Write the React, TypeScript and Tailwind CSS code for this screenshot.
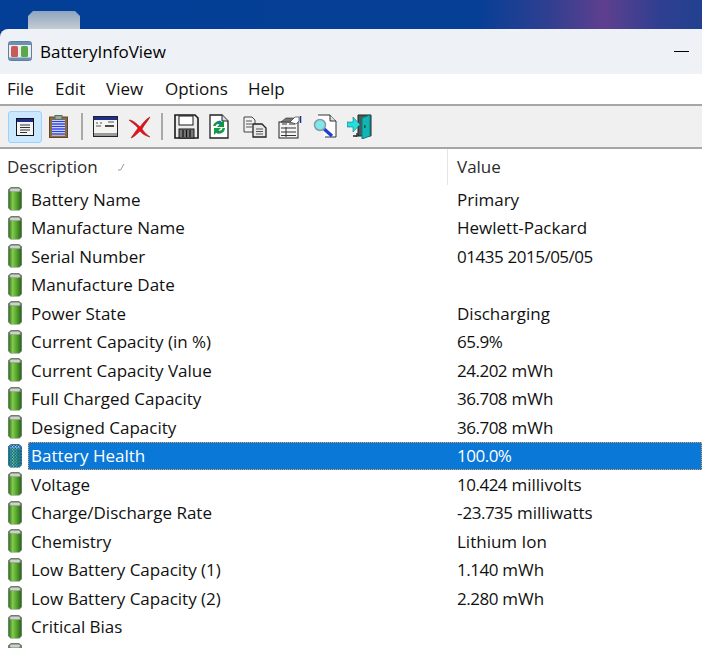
const rows: [string, string][] = [
  ["Battery Name", "Primary"],
  ["Manufacture Name", "Hewlett-Packard"],
  ["Serial Number", "01435 2015/05/05"],
  ["Manufacture Date", ""],
  ["Power State", "Discharging"],
  ["Current Capacity (in %)", "65.9%"],
  ["Current Capacity Value", "24.202 mWh"],
  ["Full Charged Capacity", "36.708 mWh"],
  ["Designed Capacity", "36.708 mWh"],
  ["Battery Health", "100.0%"],
  ["Voltage", "10.424 millivolts"],
  ["Charge/Discharge Rate", "-23.735 milliwatts"],
  ["Chemistry", "Lithium Ion"],
  ["Low Battery Capacity (1)", "1.140 mWh"],
  ["Low Battery Capacity (2)", "2.280 mWh"],
  ["Critical Bias", ""],
  ["", ""],
];

const menus = [
  { label: "File", width: "w-[48px]" },
  { label: "Edit", width: "w-[51px]" },
  { label: "View", width: "w-[59px]" },
  { label: "Options", width: "w-[83px]" },
  { label: "Help", width: "w-[50px]" },
];

// digits run a bit wider here than in the screenshot's font
function Value({ text }: { text: string }) {
  return (
    <span>
      {text.split(/([\d./]+)/).map((part, i) =>
        i % 2 === 1 ? (
          <span key={i} className="tracking-[-0.5px]">
            {part}
          </span>
        ) : (
          part
        ),
      )}
    </span>
  );
}

function BatteryIcon({ selected }: { selected?: boolean }) {
  return (
    <svg width="16" height="26" viewBox="0 0 16 26" className="shrink-0">
      <defs>
        <linearGradient id="batt" x1="0" x2="1" y1="0" y2="0">
          <stop offset="0" stopColor="#2f7a1e" />
          <stop offset="0.3" stopColor="#86c94e" />
          <stop offset="0.6" stopColor="#58a82f" />
          <stop offset="1" stopColor="#2a6a18" />
        </linearGradient>
        <pattern id="mesh" width="3" height="3" patternUnits="userSpaceOnUse">
          <rect width="2" height="1.500" fill="#0a78d7" />
          <rect x="1.500" y="1.500" width="1.500" height="1.500" fill="#0a5fb0" />
        </pattern>
      </defs>
      <path d="M4 1h8l3 2.500v18.500l-2.500 2.500h-9L1 22V3.500z" fill="#6f7f6c" />
      <rect x="3" y="2.500" width="10" height="3" rx="1.500" fill="#cdd3c9" />
      <path d="M2 6h12v16l-2 2H4l-2-2z" fill="url(#batt)" />
      {selected && <path d="M4 1h8l3 2.500v18.500l-2.500 2.500h-9L1 22V3.500z" fill="url(#mesh)" />}
    </svg>
  );
}

function AppIcon() {
  return (
    <svg width="24" height="20" viewBox="0 0 24 20">
      <rect x="0.5" y="0.5" width="23" height="19" rx="2" fill="#e8eef2" stroke="#5f7f9f" />
      <rect x="1" y="1" width="22" height="3" fill="#6d8fb0" />
      <rect x="3" y="5" width="7" height="11" rx="1.500" fill="#c95a5a" />
      <rect x="13" y="5" width="7" height="11" rx="1.500" fill="#5aa84a" />
      <rect x="1" y="16.500" width="22" height="2.500" fill="#6d8fb0" />
    </svg>
  );
}

function ReportIcon() {
  return (
    <svg width="18" height="18" viewBox="0 0 18 18">
      <rect x="0.5" y="0.5" width="17" height="17" fill="#f4f4f4" stroke="#111" />
      <rect x="1" y="1" width="16" height="3" fill="#1c2f8f" />
      <path d="M4 7h10M4 9.500h10M4 12h10M4 14.500h7" stroke="#333" strokeWidth="1.200" />
    </svg>
  );
}

function ClipboardIcon() {
  return (
    <svg width="19" height="23" viewBox="0 0 19 23">
      <rect x="0.5" y="2" width="18" height="20.500" fill="#8f6a3a" stroke="#5c4a2a" />
      <rect x="3" y="5" width="13" height="15.500" fill="#fff" />
      <path d="M3 6.500h13M3 9h13M3 11.500h13M3 14h13M3 16.500h13M3 19h13" stroke="#2840e0" strokeWidth="1.300" />
      <rect x="6" y="0.5" width="7" height="4" fill="#9aa89a" stroke="#55705a" />
    </svg>
  );
}

function WindowIcon() {
  return (
    <svg width="25" height="21" viewBox="0 0 25 21">
      <rect x="0.5" y="0.5" width="24" height="20" fill="#f4f4f0" stroke="#222" />
      <rect x="1" y="1" width="23" height="3" fill="#1c2f8f" />
      <rect x="1" y="17" width="23" height="3" fill="#9a9a9a" />
      <path d="M3 7h2M7 7h2M3 10h5M15 6h6" stroke="#555" strokeWidth="1.200" />
      <path d="M12 10h9" stroke="#111" strokeWidth="1.500" />
    </svg>
  );
}

function DeleteIcon() {
  return (
    <svg width="24" height="24" viewBox="0 0 24 24">
      <path d="M1 5c4 0 8 4 11 7 3-4 6-8 10-10-2 4-6 8-8 12 2 3 5 6 8 8-4-1-8-3-10-6-3 3-6 6-9 7 2-3 5-7 7-10C8 10 4 8 1 5z" fill="#ee1016" stroke="#7a1015" strokeWidth="0.5" />
    </svg>
  );
}

function SaveIcon() {
  return (
    <svg width="25" height="25" viewBox="0 0 25 25">
      <path d="M1 1h20l3 3v20H1z" fill="#ededed" stroke="#1a1a1a" strokeWidth="1.600" />
      <rect x="5" y="2" width="14" height="9" fill="#fff" stroke="#1a1a1a" />
      <rect x="5" y="15" width="15" height="9" fill="#777" stroke="#1a1a1a" />
      <path d="M9 16v7M12.500 16v7M16 16v7" stroke="#111" strokeWidth="1.200" />
    </svg>
  );
}

function RefreshIcon() {
  return (
    <svg width="20" height="25" viewBox="0 0 20 25">
      <path d="M1 1h12l6 6v17H1z" fill="#fff" stroke="#222" strokeWidth="1.300" />
      <path d="M13 1v6h6" fill="#ddd" stroke="#222" />
      <path d="M4 12a6 6 0 0 1 9-4l2-2v7h-7l2.500-2.500a3 3 0 0 0-4 1.500z" fill="#0f9a3a" />
      <path d="M16 14a6 6 0 0 1-9 5l-2 2v-7h7l-2.500 2.500a3 3 0 0 0 4-2.500z" fill="#12a03f" />
      <path d="M8 7.500l3-1 2 2-2 2z" fill="#1f6fc0" />
      <path d="M7 15l2 2 2 .500-2 2z" fill="#1f6fc0" />
    </svg>
  );
}

function CopyIcon() {
  return (
    <svg width="24" height="22" viewBox="0 0 24 22">
      <path d="M1 1h8l3 3v12H1z" fill="#f2f2f2" stroke="#444" />
      <path d="M3 5h6M3 8h6M3 11h6" stroke="#555" />
      <path d="M10 8h9l4 4v9H10z" fill="#e8e8e8" stroke="#222" strokeWidth="1.300" />
      <path d="M13 13h7M13 15.500h7M13 18h7" stroke="#555" />
    </svg>
  );
}

function PropertiesIcon() {
  return (
    <svg width="24" height="24" viewBox="0 0 24 24">
      <rect x="1" y="7" width="19" height="16" fill="#f4f4f4" stroke="#222" />
      <path d="M3 7l5-4h8l-4 4z" fill="#777" stroke="#222" strokeWidth="0.600" />
      <path d="M12 7l5-5h4v4l-3 3z" fill="#fff" stroke="#222" strokeWidth="0.600" />
      <path d="M22.500 1v7" stroke="#1c2f8f" strokeWidth="1.500" />
      <path d="M4 9h5M11 9h6M3 13h15M3 17h15M3 20.500h15M8 12v10" stroke="#333" strokeWidth="1" />
    </svg>
  );
}

function FindIcon() {
  return (
    <svg width="24" height="25" viewBox="0 0 24 25">
      <path d="M5 1h12l6 6v16H12" fill="#fff" stroke="#333" />
      <path d="M17 1v6h6" fill="#ddd" stroke="#333" />
      <path d="M10 14l9 8" stroke="#1f3fd0" strokeWidth="3.200" />
      <circle cx="7" cy="11" r="5.500" fill="#7fe6ec" stroke="#8a9aa4" strokeWidth="1.500" />
    </svg>
  );
}

function ExitIcon() {
  return (
    <svg width="25" height="25" viewBox="0 0 25 25">
      <path d="M11 1h13v21H11z" fill="#4a5a5a" stroke="#222" />
      <path d="M15 4l8-3v21l-8 3z" fill="#12b5b5" stroke="#0b7f7f" />
      <rect x="17" y="11" width="1.500" height="3" fill="#063" />
      <path d="M0 8h6V3l7 7.500-7 7.500v-5H0z" fill="#20e0e0" stroke="#0a5a5a" strokeWidth="0.500" />
      <path d="M10 19v4M6 22h4" stroke="#222" strokeWidth="1.300" />
    </svg>
  );
}

function Divider({ className }: { className: string }) {
  return <div className={`h-[27px] w-[2px] shrink-0 bg-[#a9a9a9] ${className}`} />;
}

export default function App() {
  return (
    <div
      className="h-[648px] w-[702px] overflow-hidden bg-[#0a3d91] text-[#111]"
      style={{ fontFamily: '"Open Sans", "Noto Sans", sans-serif' }}
    >
      {/* Desktop behind the window */}
      <div className="h-[29px] bg-[linear-gradient(90deg,#033f97_0%,#063f96_68%,#2f3f90_78%,#5f3f8f_86%,#2f3f90_94%,#234090_100%)] pl-[28px] pt-[11px]">
        <div className="h-[18px] w-[52px] bg-[linear-gradient(180deg,#8ea4c0,#c4ccd4)] [clip-path:polygon(5px_0,47px_0,100%_5px,100%_100%,0_100%,0_5px)]" />
      </div>

      {/* Title bar */}
      <div className="flex h-[45px] items-center justify-between rounded-tl-[8px] bg-[#eef2f6] pb-[1px] pl-[8px] pr-[13px]">
        <div className="flex items-center gap-[8px]">
          <AppIcon />
          <span className="text-[17px] leading-none text-black">BatteryInfoView</span>
        </div>
        <div className="h-[1px] w-[15px] bg-black" />
      </div>

      {/* Menu */}
      <div className="flex h-[30px] items-center bg-white pl-[7px] text-[17px]">
        {menus.map((m) => (
          <span key={m.label} className={m.width}>
            {m.label}
          </span>
        ))}
      </div>

      {/* Toolbar */}
      <div className="flex h-[45px] items-center border-y-2 border-[#a6a6a6] bg-[#f0f0f0] pl-[8px]">
        <div className="flex h-[32px] w-[34px] items-center justify-center rounded-[3px] border border-[#99d1ff] bg-[#cce8ff]">
          <ReportIcon />
        </div>
        <div className="ml-[7px]">
          <ClipboardIcon />
        </div>
        <Divider className="ml-[13px]" />
        <div className="ml-[10px]">
          <WindowIcon />
        </div>
        <div className="ml-[10px]">
          <DeleteIcon />
        </div>
        <Divider className="ml-[9px]" />
        <div className="ml-[11px]">
          <SaveIcon />
        </div>
        <div className="ml-[10px]">
          <RefreshIcon />
        </div>
        <div className="ml-[14px]">
          <CopyIcon />
        </div>
        <div className="ml-[11px]">
          <PropertiesIcon />
        </div>
        <div className="ml-[11px]">
          <FindIcon />
        </div>
        <div className="ml-[10px]">
          <ExitIcon />
        </div>
      </div>

      {/* Column headers */}
      <div className="flex h-[36px] items-center bg-white text-[17px] text-[#2b2b2b]">
        <div className="flex h-full w-[448px] items-center justify-between border-r border-[#e5e5e5] pl-[7px] pr-[326px]">
          <span>Description</span>
          <svg width="8" height="8" viewBox="0 0 8 8" className="mr-[-4px]">
            <path d="M1 7h2.500L7 1" fill="none" stroke="#9a9a9a" strokeWidth="1" />
          </svg>
        </div>
        <span className="pl-[9px]">Value</span>
      </div>

      {/* Rows */}
      <div className="bg-white text-[17px]">
        {rows.map(([name, value], i) => {
          const selected = name === "Battery Health";
          return (
            <div key={i} className="flex h-[28.5px] items-center pl-[7px]">
              <BatteryIcon selected={selected} />
              <div
                className={`ml-[5px] flex h-full min-w-0 flex-1 items-center ${
                  selected ? "border border-dotted border-[#f0a050] bg-[#0a78d7] pl-[2px] text-white" : "pl-[3px]"
                }`}
              >
                <span className="w-[426px] shrink-0 truncate">{name}</span>
                <Value text={value} />
              </div>
            </div>
          );
        })}
      </div>
    </div>
  );
}
